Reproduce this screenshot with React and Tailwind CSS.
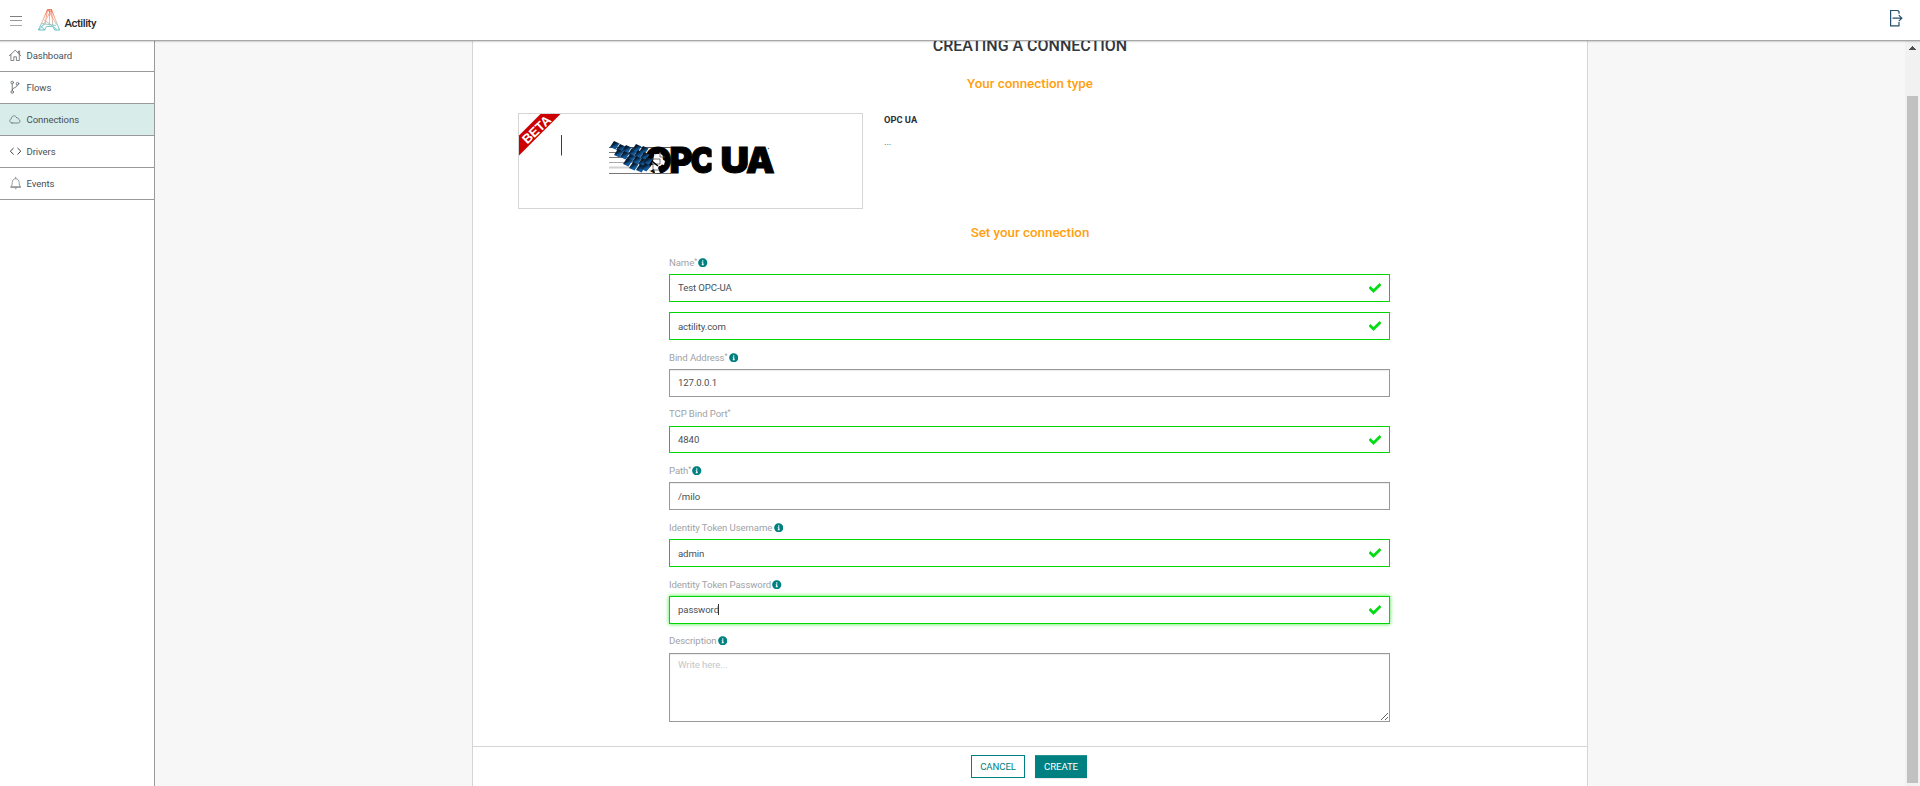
import { FaCheck, FaInfoCircle } from "react-icons/fa";

const ACTIVE = "Connections";

function Icon({ children, className, viewBox = "0 0 14 14" }) {
  return (
    <svg viewBox={viewBox} className={className} fill="none" stroke="currentColor" strokeWidth="0.8" strokeLinecap="round" strokeLinejoin="round">
      {children}
    </svg>
  );
}

const HomeIcon = () => (
  <Icon className="-mt-[2px] h-[14px] w-[14px] text-[#63686c]">
    <path d="M1.3 7.700 7.200 2.200l5.600 5.500M2.900 6.400v6.100h2.900V8.800h2.600v3.700h2.900V6.400M10.400 4.800V3h1.200v2.900" />
  </Icon>
);
const BranchIcon = () => (
  <Icon className="-mt-[2px] h-[14px] w-[14px] text-[#5c6165]">
    <circle cx="4.200" cy="2.500" r="1.300" />
    <circle cx="4.200" cy="12" r="1.300" />
    <circle cx="9.500" cy="3.700" r="1.300" />
    <path d="M4.200 3.800v6.800M9.400 5C9.200 8.400 4.400 7 4.200 9.800" />
  </Icon>
);
const CloudIcon = () => (
  <Icon className="-mt-[2px] h-[14px] w-[14px] text-[#637373]">
    <path d="M4 11h6.200a1.900 1.900 0 0 0 .5-3.700C10.500 6 9.500 5.700 8.800 6 8 4.200 6.800 3.600 5.500 3.900 4 4.200 3.300 5.500 3.500 6.700 2.300 6.900 1.700 7.800 1.800 8.900 1.900 10.100 2.700 11 4 11z" />
  </Icon>
);
const CodeIcon = () => (
  <Icon className="-mt-px h-[14px] w-[14px] text-[#3a3f43]">
    <path d="M5.600 4 2.300 7.200l3.300 3.200M9.500 4l3.300 3.200-3.300 3.200" strokeWidth="1" strokeLinecap="butt" />
  </Icon>
);
const BellIcon = () => (
  <Icon className="-mt-[2px] h-[14px] w-[14px] text-[#7d8184]">
    <path d="M3 10.800c1-.9 1.200-2.400 1.200-4.200C4.200 4.200 5.700 2.700 7.700 2.700s3.500 1.500 3.500 3.900c0 1.800.2 3.300 1.200 4.200zM7.700 2.600V1.200M6.700 11.500c0 1.700 2 1.700 2 0" />
    <path d="M3 11h9.400" strokeWidth="1.200" />
  </Icon>
);

const NAV = [
  { label: "Dashboard", Glyph: HomeIcon },
  { label: "Flows", Glyph: BranchIcon },
  { label: "Connections", Glyph: CloudIcon },
  { label: "Drivers", Glyph: CodeIcon },
  { label: "Events", Glyph: BellIcon },
];

function ActilityMark() {
  return (
    <svg viewBox="0 0 22 22" className="h-[22px] w-[22px]" fill="none" strokeLinejoin="round">
      <defs>
        <linearGradient id="mark" x1="0" y1="0" x2="0" y2="22" gradientUnits="userSpaceOnUse">
          <stop offset="0" stopColor="#f0623f" />
          <stop offset="0.5" stopColor="#f4ad90" />
          <stop offset="0.75" stopColor="#7fc6c6" />
          <stop offset="1" stopColor="#45b2ba" />
        </linearGradient>
      </defs>
      <g stroke="url(#mark)">
        <path d="M9.500.600.500 21M9.500.600h4L21.500 21M13.500.600l1.300 16" strokeWidth="0.900" />
        <path d="M9.500.600 7 15.500M10 .600l8.500 15M13.500.600 4.500 17M11.500.600v16" strokeWidth="0.800" />
        <path d="M3.500 14.500l14.500 2M5.500 10.500l13 9.500M.500 21l6-6M.500 21h6.200l1.600-3.500h6.400l2.100 3.500h4.700M2.500 17l4.500 4" strokeWidth="0.900" />
      </g>
    </svg>
  );
}

function Header() {
  return (
    <header className="relative z-10 flex h-10 shrink-0 items-center bg-white shadow-[0_1px_0_#a8a8a8,0_2px_0_rgba(0,0,0,0.1),0_3px_1px_rgba(0,0,0,0.03)]">
      <div className="ml-[10px] mt-px flex w-3 flex-col gap-[3.500px]">
        <span className="h-px bg-[#808080]" />
        <span className="h-px bg-[#999]" />
        <span className="h-px bg-[#a8a8a8]" />
      </div>
      <div className="ml-4">
        <ActilityMark />
      </div>
      <span className="ml-[4.500px] mt-[7px] text-[11.300px] font-medium leading-4 tracking-[-0.450px] text-[#2a2a2a]">Actility</span>
      <svg viewBox="0 0 14 18" className="mb-[4px] ml-auto mr-[17px] h-[18px] w-[14px]" fill="none" stroke="#24506f" strokeWidth="1.200">
        <path d="M10 4.800V2.600L8.800 1.500H1.600v15.400H10v-4" />
        <path d="M3.500 9.200h9.300M9.800 6.200l3 3-3 3" />
      </svg>
    </header>
  );
}

function Sidebar() {
  return (
    <nav className="w-[155px] shrink-0 border-r border-[#999] bg-white">
      {NAV.map(({ label, Glyph }) => (
        <a
          key={label}
          className={
            label === ACTIVE
              ? "flex h-8 items-center gap-[4.500px] border-b border-[#999] bg-[#d8ecea] pl-2"
              : "flex h-8 items-center gap-[4.500px] border-b border-[#999] pl-2"
          }
        >
          <Glyph />
          <span className="leading-4 text-[#495057]">{label}</span>
        </a>
      ))}
    </nav>
  );
}

const SHARDS = [
  [7, 5], [13, 8], [11, 13], [19, 9], [17, 15], [25, 12], [23, 18], [20, 22],
  [29, 8], [31, 14], [29, 20], [26, 26], [36, 10], [37, 16], [35, 22], [33, 28], [40, 21], [38, 27],
];

function OpcLogo() {
  return (
    <svg viewBox="0 0 168 36" className="h-[36px] w-[168px]">
      <defs>
        <linearGradient id="shard" x1="0.1" y1="0" x2="0.7" y2="1">
          <stop offset="0" stopColor="#050c16" />
          <stop offset="0.400" stopColor="#08203a" />
          <stop offset="0.700" stopColor="#125ea2" />
          <stop offset="1" stopColor="#0f5290" />
        </linearGradient>
      </defs>
      <g fill="#777">
        <rect x="2" y="7" width="62" height="1" fill="#555" />
        <rect x="2" y="12" width="30" height="1" />
        <rect x="2" y="17" width="30" height="1" />
        <rect x="2" y="22" width="30" height="1" fill="#aaa" />
        <rect x="2" y="26.500" width="30" height="2" fill="#d2d2d2" />
        <rect x="2" y="33" width="62" height="1" />
      </g>
      <g fontFamily="Inter" fontWeight="900" fontSize="36" stroke="#000" strokeWidth="1">
        <text x="37.500" y="33.200" textLength="27" lengthAdjust="spacingAndGlyphs">O</text>
        <text x="62.500" y="33.200" textLength="23" lengthAdjust="spacingAndGlyphs">P</text>
        <text x="83.500" y="33.200" textLength="25" lengthAdjust="spacingAndGlyphs">C</text>
        <text x="113.500" y="33.200" textLength="28.500" lengthAdjust="spacingAndGlyphs">U</text>
        <text x="139" y="33.200" textLength="28.500" lengthAdjust="spacingAndGlyphs">A</text>
      </g>
      <rect x="104.700" y="5" width="6" height="30" fill="#fff" />
      <path d="M47 14l4 1 2-2 3 3-1 3 3 2-1 4-4-1-2 4 2 5h-5l-1-4-4 2-4-3 3-3 4 0-1-4 3-2z" fill="#fff" />
      <path d="M44 19h9v5h-7v6h6M53 12v5h5" fill="none" stroke="#555" strokeWidth="0.800" />
      <path d="M40 14l6 8 5 4M39 30l5-5" fill="none" stroke="#000" strokeWidth="1.600" />
      <g fill="url(#shard)">
        {SHARDS.map(([x, y]) => (
          <path key={`${x}-${y}`} d={`M${x - 4} ${y + 2}l4 -6l5.500 2.600l-4 6z`} />
        ))}
      </g>
      <circle cx="161.500" cy="8.500" r="0.800" fill="#777" />
    </svg>
  );
}

function ConnectionType() {
  return (
    <section className="mt-[19px] flex pl-[45px]">
      <div className="relative flex h-24 w-[345px] justify-center border border-[#d5d5d5]">
        <svg viewBox="0 0 44 44" className="absolute left-0 top-0 h-11 w-11 overflow-visible">
          <path d="M0 21.500 21.500 0H41.500L0 41.500z" fill="#c00" />
          <path d="M42 21h1v20.500h-1z" fill="#c00" />
          <text transform="translate(8.300 30.600) rotate(-43.500)" fontFamily="Liberation Sans" fontWeight="700" fontSize="13" textLength="34" lengthAdjust="spacingAndGlyphs" fill="#fff">BETA</text>
        </svg>
        <div className="mt-[26px]">
          <OpcLogo />
        </div>
      </div>
      <div className="ml-[21px] leading-4">
        <p className="-mt-px text-[9.333px] font-bold tracking-normal text-[#2b3035]">OPC UA</p>
        <p className="mt-[6px] text-[#495057]">...</p>
      </div>
    </section>
  );
}

const FIELDS = [
  { label: "Name", required: true, info: true, value: "Test OPC-UA", valid: true, wrap: "mt-[12px]", head: "h-[19px]", box: "h-7 pb-px" },
  { value: "actility.com", valid: true, wrap: "mt-[10px]", box: "h-7 pt-px" },
  { label: "Bind Address", required: true, info: true, value: "127.0.0.1", wrap: "mt-[10px]", head: "h-[19px]", box: "h-7 pb-px" },
  { label: "TCP Bind Port", required: true, value: "4840", valid: true, wrap: "mt-[9px]", head: "h-5", box: "h-[27px]" },
  { label: "Path", required: true, info: true, value: "/milo", wrap: "mt-[10px]", head: "h-[19px]", box: "h-7 pt-px" },
  { label: "Identity Token Username", info: true, value: "admin", valid: true, wrap: "mt-[10px]", head: "h-[19px]", box: "h-7 pt-px" },
  { label: "Identity Token Password", info: true, value: "password", valid: true, focused: true, wrap: "mt-[10px]", head: "h-[19px]", box: "h-7 pb-px" },
];

function Label({ text, required, info, className }) {
  return (
    <div className={`flex leading-4 text-[#a0a3a6] ${className}`}>
      <span>{text}</span>
      {required && <span className="-mt-[2.500px] text-[7px]">*</span>}
      {info && <FaInfoCircle className="ml-[1.300px] mt-[2.500px] h-[9.500px] w-[9.500px] text-[#008080]" />}
    </div>
  );
}

function borderOf({ valid, focused }) {
  if (focused) return "border-[#00d600] shadow-[0_0_4px_rgba(0,230,0,0.75)]";
  if (valid) return "border-[#00d600]";
  return "border-[#999] shadow-[inset_0_1px_1px_rgba(0,0,0,0.08)]";
}

function Field(field) {
  const { label, value, valid, focused, wrap, head, box, required, info } = field;
  return (
    <div className={wrap}>
      {label && <Label text={label} required={required} info={info} className={head} />}
      <div className="relative flex">
        <input
          defaultValue={value}
          className={`block w-full border bg-white pl-2 pr-8 text-[#495057] outline-none ${box} ${borderOf({ valid, focused })}`}
        />
        {focused && <span className="absolute left-[49px] top-2 h-[11px] w-px bg-[#333]" />}
        {valid && <FaCheck className="absolute right-[9px] top-2 h-3 w-3 stroke-[#00dc10] stroke-[24px] text-[#00dc10]" />}
      </div>
    </div>
  );
}

function Scrollbar() {
  return (
    <div className="flex w-[15px] shrink-0 flex-col items-center bg-[#f1f1f1]">
      <svg viewBox="0 0 7 4" className="mt-[6px] h-1 w-[7px]" shapeRendering="crispEdges">
        <path d="M3.500 0 7 4H0z" fill="#505050" />
      </svg>
      <div className="mt-[46px] h-[687px] w-[11px] bg-[#c1c1c1]" />
    </div>
  );
}

export default function App() {
  return (
    <div className="flex h-[786px] w-[1920px] flex-col overflow-hidden bg-white font-['Roboto',sans-serif] text-[9.600px] tracking-[-0.100px]">
      <Header />
      <div className="flex min-h-0 flex-1">
        <Sidebar />
        <main className="flex flex-1 justify-center bg-[#f7f7f7]">
          <div className="flex h-full w-[1116px] flex-col border-x border-[#d5d5d5] bg-white">
            <h1 className="-mt-[6px] text-center text-base font-medium leading-6 tracking-normal text-[#32383e]">CREATING A CONNECTION</h1>
            <h2 className="mt-4 text-center text-[13.333px] font-medium leading-5 tracking-normal text-[#ff9f0f]">Your connection type</h2>
            <ConnectionType />
            <h2 className="mt-[14px] text-center text-[13.333px] font-medium leading-5 tracking-normal text-[#ff9f0f]">Set your connection</h2>
            <form className="ml-[196px] w-[721px]">
              {FIELDS.map((field) => (
                <Field key={field.value} {...field} />
              ))}
              <div className="mt-[9px]">
                <Label text="Description" info className="h-5" />
                <textarea
                  placeholder="Write here..."
                  className="block h-[69px] w-full resize border border-[#999] px-2 py-[3px] leading-4 shadow-[inset_0_1px_1px_rgba(0,0,0,0.08)] outline-none placeholder:text-[#c4c6c8]"
                />
              </div>
            </form>
            <footer className="mt-6 flex justify-center gap-[10px] border-t border-[#d5d5d5] pr-[2px] pt-2">
              <button className="h-[23px] w-[54px] border border-[#008080] pt-px text-[#008080]">CANCEL</button>
              <button className="h-[23px] w-[52px] bg-[#008080] pt-px text-white shadow-[inset_0_1px_0_rgba(255,255,255,0.15),0_1px_1px_rgba(0,0,0,0.08)]">CREATE</button>
            </footer>
          </div>
        </main>
        <Scrollbar />
      </div>
    </div>
  );
}
